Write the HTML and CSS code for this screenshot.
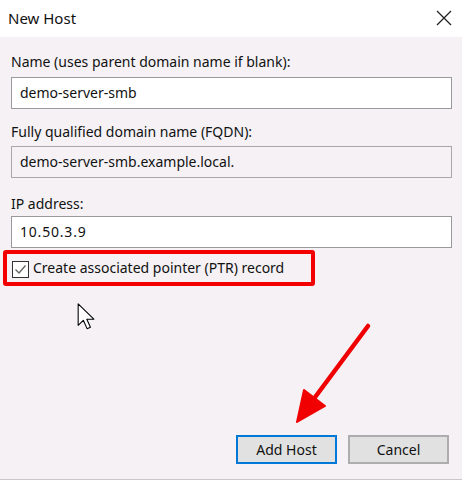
FILE: index.html
```html
<!DOCTYPE html>
<html>
<head>
<meta charset="utf-8">
<link rel="stylesheet" href="styles.css">
</head>
<body>
<div class="window">
  <div class="titlebar">
    <span class="title">New Host</span>
    <svg class="close" width="16" height="16" viewBox="0 0 16 16"><path d="M1 1 L15 15 M15 1 L1 15" stroke="#222" stroke-width="1.3" fill="none"/></svg>
  </div>
  <div class="content">
    <div class="label l1">Name (uses parent domain name if blank):</div>
    <div class="field">demo-server-smb</div>
    <div class="label l2">Fully qualified domain name (FQDN):</div>
    <div class="field readonly">demo-server-smb.example.local.</div>
    <div class="label l3">IP address:</div>
    <div class="field ip">10.50.3.9</div>
    <div class="highlight">
      <span class="checkbox"><svg width="15" height="15" viewBox="0 0 15 15"><path d="M2.5 7.5 L6 11 L12.5 3.5" stroke="#666" stroke-width="1.4" fill="none"/></svg></span>
      <span class="cblabel">Create associated pointer (PTR) record</span>
    </div>
    <div class="spacer"></div>
    <div class="buttons">
      <button class="btn primary">Add Host</button>
      <button class="btn">Cancel</button>
    </div>
  </div>
  <svg class="overlay" width="462" height="481" viewBox="0 0 462 481">
    <line x1="368" y1="326" x2="310" y2="404" stroke="#f00000" stroke-width="4.5" stroke-linecap="round"/>
    <polygon points="297,422 304,390 325,406" fill="#f00000" stroke="#f00000" stroke-width="2" stroke-linejoin="round"/>
  </svg>
  <svg class="cursor" width="18" height="27" viewBox="0 0 13 20">
    <path d="M0.7 0.7 L0.7 16.5 L4.5 12.8 L7.3 19 L9.8 18 L7.1 12 L12.3 12 Z" fill="#fff" stroke="#000" stroke-width="0.8" stroke-linejoin="round"/>
  </svg>
</div>
</body>
</html>
```
FILE: styles.css
```css
* { box-sizing: border-box; }
html, body { margin: 0; padding: 0; }
body {
  width: 462px;
  height: 481px;
  overflow: hidden;
  font-family: "Noto Sans", "Open Sans", sans-serif;
  color: #000;
}
.window {
  position: relative;
  width: 462px;
  height: 480px;
  background: #f5f1f5;
  border-bottom: 1px solid #c8c8c8;
  display: flex;
  flex-direction: column;
}
.titlebar {
  height: 37px;
  background: #fff;
  display: flex;
  align-items: center;
  justify-content: space-between;
  padding: 0 10px 2px 8px;
  flex: none;
}
.title {
  font-size: 15px;
  color: #111;
}
.close { display: block; margin-right: 0; }
.content {
  flex: 1;
  display: flex;
  flex-direction: column;
  padding: 0 10px 15px 11px;
}
.label {
  font-size: 14px;
  line-height: 18px;
  color: #111;
}
.l1 { margin-top: 16px; margin-bottom: 6px; }
.l2 { margin-top: 14px; margin-bottom: 5px; }
.l3 { margin-top: 17px; margin-bottom: 3px; }
.field {
  height: 32px;
  border: 1px solid #9a9a9a;
  background: #fff;
  font-size: 14px;
  line-height: 30px;
  padding-left: 8px;
  color: #111;
}
.field.readonly {
  background: #f5f1f5;
  border-color: #a8a8a8;
}
.field.ip { letter-spacing: 0.8px; }
.highlight {
  margin-top: 2px;
  margin-left: -8px;
  width: 312px;
  height: 36px;
  border: 4px solid #f50000;
  border-radius: 3px;
  display: flex;
  align-items: center;
  padding-left: 5px;
}
.checkbox {
  width: 17px;
  height: 17px;
  border: 1px solid #333;
  background: #fff;
  display: flex;
  align-items: center;
  justify-content: center;
  margin-right: 4px;
  margin-top: 2px;
}
.checkbox svg { display: block; }
.cblabel {
  font-size: 14px;
  line-height: 18px;
  color: #111;
}
.spacer { flex: 1; }
.buttons {
  display: flex;
  justify-content: flex-end;
  gap: 11px;
  padding-right: 3px;
}
.btn {
  width: 101px;
  height: 29px;
  font-family: "Noto Sans", "Open Sans", sans-serif;
  font-size: 14px;
  color: #111;
  background: #e1e1e1;
  border: 2px solid #adadad;
  padding: 0;
}
.btn.primary {
  border-color: #0078d7;
}
.overlay {
  position: absolute;
  left: 0;
  top: 0;
  pointer-events: none;
}
.cursor {
  position: absolute;
  left: 77px;
  top: 303px;
}
```
